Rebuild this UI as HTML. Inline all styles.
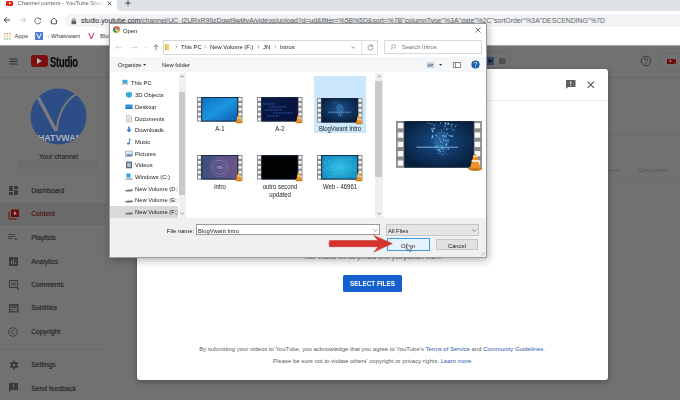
<!DOCTYPE html>
<html><head><meta charset="utf-8">
<style>
*{margin:0;padding:0;box-sizing:border-box}
html,body{width:680px;height:400px;overflow:hidden;background:#fff;font-family:"Liberation Sans",sans-serif}
.a{position:absolute}
.t{position:absolute;white-space:nowrap;line-height:1}
</style></head><body>
<!-- Chrome tab strip -->
<div class="a" style="left:0;top:0;width:680px;height:12px;background:#fff"></div>
<div class="a" style="left:116.5px;top:0;width:564px;height:11px;background:#dee1e6;border-radius:0 0 0 4px"></div>
<div class="a" style="left:6px;top:1px;width:7px;height:4.5px;background:#e62117;border-radius:1.2px"></div>
<svg class="a" style="left:8.6px;top:1.9px" width="3" height="3"><path d="M0 0L2.2 1.3L0 2.6Z" fill="#fff"/></svg>
<div class="t" style="left:17.5px;top:1.2px;font-size:5.9px;color:#606367;width:86px;overflow:hidden;-webkit-mask-image:linear-gradient(90deg,#000 85%,transparent)">Channel content - YouTube Studio</div>
<svg class="a" style="left:106.5px;top:1px" width="5" height="5"><path d="M0.7 0.7L4.3 4.3M4.3 0.7L0.7 4.3" stroke="#3c4043" stroke-width="0.8"/></svg>
<svg class="a" style="left:125px;top:0px" width="6" height="6"><path d="M3 0.3V5.7M0.3 3H5.7" stroke="#3c4043" stroke-width="0.9"/></svg>
<!-- toolbar -->
<div class="a" style="left:0;top:12px;width:680px;height:33px;background:#fff"></div>
<div class="a" style="left:65px;top:14px;width:640px;height:13px;background:#f1f3f4;border-radius:6.5px"></div>
<svg class="a" style="left:3px;top:16px" width="8" height="8"><path d="M7.2 4H1.2M4 1.2L1.2 4L4 6.8" stroke="#404346" stroke-width="1" fill="none"/></svg>
<svg class="a" style="left:18.5px;top:16px" width="8" height="8"><path d="M0.8 4H6.8M4 1.2L6.8 4L4 6.8" stroke="#bdc1c6" stroke-width="0.9" fill="none"/></svg>
<svg class="a" style="left:34px;top:16.5px" width="8" height="8"><path d="M6.3 2.2A3 3 0 1 0 6.8 4.6" stroke="#5f6368" stroke-width="0.9" fill="none"/><path d="M4.6 1.2H7V3.6Z" fill="#5f6368"/></svg>
<svg class="a" style="left:50px;top:16.5px" width="8" height="8"><path d="M1.4 3.6V6.8H6.4V3.6M0.6 4.2L3.9 1L7.2 4.2" stroke="#404346" stroke-width="0.9" fill="none"/></svg>
<svg class="a" style="left:70.5px;top:17.5px" width="6" height="7"><rect x="0.5" y="2.6" width="4.6" height="3.6" fill="#5f6368"/><path d="M1.5 2.8V1.9A1.3 1.3 0 0 1 4.1 1.9V2.8" stroke="#5f6368" stroke-width="0.8" fill="none"/></svg>
<div class="t" style="left:81px;top:18.2px;font-size:6.85px;color:#202124">studio.youtube.com<span style="color:#5f6368">/channel/UC_i2URxR99zDqwt9wiitvA/videos/upload?d=ud&amp;filter=%5B%5D&amp;sort=%7B"columnType"%3A"date"%2C"sortOrder"%3A"DESCENDING"%7D</span></div>
<!-- bookmarks -->
<svg class="a" style="left:3.5px;top:32.5px" width="7" height="7">
<g fill="#d99a92"><rect x="0" y="0" width="1.5" height="1.5"/><rect x="2.6" y="0" width="1.5" height="1.5"/><rect x="5.2" y="0" width="1.5" height="1.5"/></g>
<g fill="#e3cf8f"><rect x="0" y="2.6" width="1.5" height="1.5"/><rect x="2.6" y="2.6" width="1.5" height="1.5"/><rect x="5.2" y="2.6" width="1.5" height="1.5"/></g>
<g fill="#8fbf99"><rect x="0" y="5.2" width="1.5" height="1.5"/><rect x="2.6" y="5.2" width="1.5" height="1.5"/><rect x="5.2" y="5.2" width="1.5" height="1.5"/></g></svg>
<div class="t" style="left:14.5px;top:33.5px;font-size:5.9px;color:#3c4043">Apps</div>
<div class="a" style="left:35.3px;top:32.2px;width:7.8px;height:7.5px;background:#4a7dd0"></div>
<svg class="a" style="left:35.3px;top:32.2px" width="8" height="8"><path d="M1.6 1.5L3.9 6.3L6.2 1.5" stroke="#fff" stroke-width="1" fill="none"/></svg>
<div class="t" style="left:47.5px;top:33.5px;font-size:5.9px;color:#3c4043">- Whatvwant</div>
<svg class="a" style="left:88px;top:32px" width="7" height="8"><path d="M0.8 1.2L3.3 7L5.8 0.8" stroke="#c8102e" stroke-width="0.9" fill="none"/></svg>
<div class="t" style="left:100px;top:33.5px;font-size:5.9px;color:#3c4043">Blogs</div>

<!-- studio page (dimmed) -->
<div class="a" style="left:0;top:45px;width:680px;height:355px;background:#717171"></div>
<div class="a" style="left:0;top:45px;width:680px;height:1px;background:#a8a8a8"></div>
<div class="a" style="left:0;top:76.5px;width:680px;height:1px;background:#676767"></div>
<div class="a" style="left:121px;top:257px;width:1px;height:143px;background:#747474"></div>
<svg class="a" style="left:9px;top:57.5px" width="9" height="7"><path d="M0.5 1H8.5M0.5 3.5H8.5M0.5 6H8.5" stroke="#2a2a2a" stroke-width="1.05"/></svg>
<div class="a" style="left:31.3px;top:55.2px;width:16.5px;height:11.6px;background:#7a1010;border-radius:3px"></div>
<svg class="a" style="left:37.3px;top:58px" width="6" height="6"><path d="M0 0L4.8 3L0 6Z" fill="#b9b9b9"/></svg>
<div class="t" style="left:50.3px;top:54.5px;font-size:14px;font-weight:bold;color:#0a0a0a;-webkit-text-stroke:0.25px #0a0a0a;transform:scaleX(0.665);transform-origin:0 0;letter-spacing:-0.3px">Studio</div>
<!-- studio search / header right -->
<div class="a" style="left:470px;top:51.5px;width:39.5px;height:16.5px;border:1px solid #686868"></div>
<div class="a" style="left:486.5px;top:57px;width:7.2px;height:7.8px;background:#34476a"></div>
<svg class="a" style="left:486.5px;top:57px" width="8" height="8"><path d="M1.5 2L5.5 3.9L1.5 5.8Z" fill="#111"/></svg>
<svg class="a" style="left:498.5px;top:58.4px" width="7" height="6"><path d="M0 1H6.5M0 3H6.5M0 5H6.5" stroke="#2a2a2a" stroke-width="0.95"/></svg>
<svg class="a" style="left:640px;top:55px" width="12" height="12"><circle cx="6" cy="6" r="4.8" stroke="#363636" stroke-width="0.9" fill="none"/><path d="M4.4 4.8A1.6 1.6 0 1 1 6.6 6.2C6.1 6.5 6 6.8 6 7.4" stroke="#363636" stroke-width="0.9" fill="none"/><circle cx="6" cy="8.8" r="0.55" fill="#363636"/></svg>
<div class="a" style="left:660px;top:52.5px;width:30px;height:18px;border:1px solid #6b6b6b"></div>
<div class="a" style="left:667px;top:58.5px;width:6.5px;height:5px;background:#650909"></div>
<svg class="a" style="left:672.5px;top:58.5px" width="4" height="5"><path d="M0 1.5L3 0V5L0 3.5Z" fill="#650909"/></svg>
<svg class="a" style="left:668px;top:59px" width="5" height="5"><path d="M2.2 0.4V3.6M0.6 2H3.8" stroke="#b87a7a" stroke-width="0.8"/></svg>
<!-- avatar -->
<svg class="a" style="left:30px;top:88px" width="57" height="57">
<circle cx="28.5" cy="28.5" r="28" fill="#2c4d85"/>
<path d="M8.3 9.5L26 43" stroke="#7d7d7d" stroke-width="3.3"/>
<path d="M26.5 43.2C28.5 24 36 12 46.5 6" stroke="#7d7d7d" stroke-width="1.9" fill="none"/>
<clipPath id="avc"><circle cx="28.5" cy="28.5" r="28"/></clipPath><text clip-path="url(#avc)" x="28.5" y="53.2" font-family="Liberation Sans" font-weight="bold" font-size="8.6" fill="#aeb4be" text-anchor="middle" textLength="58" lengthAdjust="spacingAndGlyphs">WHATVWANT</text>
</svg>
<div class="t" style="left:39px;top:153.6px;font-size:6.72px;color:#111">Your channel</div>
<div class="a" style="left:18px;top:160px;width:81px;height:9px;background:#6c6c6c"></div>
<!-- nav -->
<div class="a" style="left:0;top:202.8px;width:106px;height:22px;background:#6a6a6a"></div>
<svg class="a" style="left:9px;top:186px" width="10" height="10"><g fill="#3b3b3b"><rect x="0" y="0" width="4" height="5"/><rect x="5" y="0" width="4" height="3"/><rect x="0" y="6" width="4" height="3"/><rect x="5" y="4" width="4" height="5"/></g></svg>
<div class="t" style="left:31.2px;top:188.0px;font-size:6.75px;color:#222;-webkit-text-stroke:0.12px #222">Dashboard</div>
<svg class="a" style="left:7.8px;top:208.8px" width="12" height="11"><path d="M1 2.5V10H8.5" stroke="#5a1010" stroke-width="1" fill="none"/><rect x="3" y="0.5" width="8" height="7.5" fill="#6b0e0e"/><path d="M6 2.3L8.6 4.25L6 6.2Z" fill="#a8a0a0"/></svg>
<div class="t" style="left:31.2px;top:211.3px;font-size:6.75px;color:#4e0d0d;-webkit-text-stroke:0.12px #4e0d0d">Content</div>
<svg class="a" style="left:8.4px;top:234px" width="10" height="7"><path d="M0 0.5H7.5M0 2.5H7.5M0 4.5H5" stroke="#3b3b3b" stroke-width="0.8"/><path d="M7 3.8L9.5 5.3L7 6.8Z" fill="#3b3b3b"/></svg>
<div class="t" style="left:31.2px;top:234.9px;font-size:6.75px;color:#222;-webkit-text-stroke:0.12px #222">Playlists</div>
<svg class="a" style="left:8.8px;top:256.7px" width="10" height="10"><rect x="0" y="0" width="9" height="9" fill="#3b3b3b"/><path d="M2.5 7V4M4.5 7V2.5M6.5 7V5.5" stroke="#7b7b7b" stroke-width="0.9"/></svg>
<div class="t" style="left:31.2px;top:258.9px;font-size:6.75px;color:#222;-webkit-text-stroke:0.12px #222">Analytics</div>
<svg class="a" style="left:8.8px;top:280px" width="10" height="10"><path d="M0.5 0.5H8.5V7.5H9L9.3 9.5L7.5 7.5H0.5Z" stroke="#3b3b3b" stroke-width="1" fill="none"/><rect x="2" y="2.2" width="5" height="3.5" fill="#555"/></svg>
<div class="t" style="left:31.2px;top:282.0px;font-size:6.75px;color:#222;-webkit-text-stroke:0.12px #222">Comments</div>
<svg class="a" style="left:8.8px;top:303.5px" width="10" height="9"><rect x="0.5" y="0.5" width="8.5" height="7.5" fill="#4a4a4a" stroke="#3b3b3b" stroke-width="1"/><path d="M1.5 4.6H4.5M5.5 4.6H8M1.5 6.3H3M4 6.3H8" stroke="#8a8a8a" stroke-width="0.8"/></svg>
<div class="t" style="left:31.2px;top:305.3px;font-size:6.75px;color:#222;-webkit-text-stroke:0.12px #222">Subtitles</div>
<svg class="a" style="left:8px;top:326.6px" width="10" height="10"><circle cx="5" cy="5" r="4.3" stroke="#3b3b3b" stroke-width="0.9" fill="none"/><path d="M6.3 3.8A1.7 1.7 0 1 0 6.3 6.2" stroke="#3b3b3b" stroke-width="0.8" fill="none"/></svg>
<div class="t" style="left:31.2px;top:329.1px;font-size:6.75px;color:#222;-webkit-text-stroke:0.12px #222">Copyright</div>
<div class="a" style="left:0;top:349px;width:106px;height:1px;background:#696969"></div>
<svg class="a" style="left:8.5px;top:359.5px" width="10" height="10"><g transform="translate(5 5)"><circle r="3.2" fill="#3b3b3b"/><g stroke="#3b3b3b" stroke-width="1.6"><path d="M0 -4.6V4.6"/><path d="M-4 -2.3L4 2.3"/><path d="M-4 2.3L4 -2.3"/></g><circle r="1.2" fill="#747474"/></g></svg>
<div class="t" style="left:31.2px;top:361.9px;font-size:6.75px;color:#222;-webkit-text-stroke:0.12px #222">Settings</div>
<svg class="a" style="left:8.5px;top:383px" width="10" height="10"><path d="M0 0H9V7H2L0 9Z" fill="#3b3b3b"/><path d="M4.5 1.5V4M4.5 5V5.8" stroke="#7b7b7b" stroke-width="0.9"/></svg>
<div class="t" style="left:31.2px;top:385.5px;font-size:6.75px;color:#222;-webkit-text-stroke:0.12px #222">Send feedback</div>
<!-- right side content behind modal -->
<div class="a" style="left:608px;top:134px;width:72px;height:1px;background:#696969"></div>
<div class="t" style="left:608px;top:167px;font-size:6.05px;color:#5a5a5a">ews</div>
<div class="t" style="left:638.4px;top:167px;font-size:6.05px;color:#5a5a5a">Comments</div>
<div class="a" style="left:608px;top:176px;width:72px;height:1px;background:#6d6d6d"></div>

<!-- upload modal -->
<div class="a" style="left:137px;top:68.8px;width:471px;height:311.4px;background:#fff;border-radius:3px;box-shadow:0 2px 6px rgba(0,0,0,.3)"></div>
<div class="a" style="left:137px;top:100px;width:471px;height:1px;background:#ececec"></div>
<svg class="a" style="left:565.5px;top:80px" width="10" height="9"><path d="M0 0H9.5V7H2L0 9Z" fill="#606060"/><path d="M4.75 1.4V4.2M4.75 5.1V5.9" stroke="#fff" stroke-width="1"/></svg>
<svg class="a" style="left:586.5px;top:80.5px" width="8" height="8"><path d="M0.6 0.6L6.9 6.9M6.9 0.6L0.6 6.9" stroke="#555" stroke-width="1.1"/></svg>
<div class="t" style="left:303px;top:253.5px;font-size:6.38px;color:#606060">Your videos will be private until you publish them.</div>
<div class="a" style="left:342.6px;top:274.5px;width:59.3px;height:17.2px;background:#1560cf;border-radius:1.5px"></div>
<div class="t" style="left:350px;top:280.4px;font-size:7px;font-weight:bold;color:#fff;transform:scaleX(0.91);transform-origin:0 0">SELECT FILES</div>
<div class="t" style="left:199.2px;top:346.8px;font-size:5.97px;color:#606060">By submitting your videos to YouTube, you acknowledge that you agree to YouTube's <span style="color:#2c5aa8">Terms of Service</span> and <span style="color:#2c5aa8">Community Guidelines</span>.</div>
<div class="t" style="left:273px;top:358.5px;font-size:5.97px;color:#606060">Please be sure not to violate others' copyright or privacy rights. <span style="color:#2c5aa8">Learn more</span></div>

<!-- open dialog -->
<div class="a" style="left:108.5px;top:22.5px;width:378px;height:235px;background:#fff;border:1px solid #9a9a9a;box-shadow:1px 2px 8px rgba(0,0,0,.32)"></div>
<svg class="a" style="left:112.8px;top:26px" width="7" height="7"><circle cx="3.5" cy="3.5" r="3.3" fill="#db4437"/><path d="M3.5 3.5L0.3 2.6A3.3 3.3 0 0 0 3 6.8Z" fill="#0f9d58"/><path d="M3.5 3.5L3 6.8A3.3 3.3 0 0 0 6.8 3.2Z" fill="#f4b400"/><circle cx="3.5" cy="3.5" r="1.5" fill="#fff"/><circle cx="3.5" cy="3.5" r="1.1" fill="#4285f4"/></svg>
<div class="t" style="left:122.8px;top:27.7px;font-size:6.2px;transform:scaleX(0.94);transform-origin:0 0;color:#1a1a1a">Open</div>
<svg class="a" style="left:475px;top:27px" width="6" height="6"><path d="M0.5 0.5L5.5 5.5M5.5 0.5L0.5 5.5" stroke="#333" stroke-width="0.7"/></svg>
<svg class="a" style="left:115px;top:44.5px" width="7" height="5"><path d="M6.5 2.5H0.8M2.8 0.5L0.8 2.5L2.8 4.5" stroke="#c4c4c4" stroke-width="0.6" fill="none"/></svg>
<svg class="a" style="left:131px;top:44.5px" width="7" height="5"><path d="M0.5 2.5H6.2M4.2 0.5L6.2 2.5L4.2 4.5" stroke="#c4c4c4" stroke-width="0.6" fill="none"/></svg>
<svg class="a" style="left:143.5px;top:46px" width="4" height="3"><path d="M0.3 0.5L1.8 2L3.3 0.5" stroke="#c4c4c4" stroke-width="0.6" fill="none"/></svg>
<svg class="a" style="left:153px;top:43.5px" width="6" height="7"><path d="M3 6.5V0.8M0.8 3L3 0.8L5.2 3" stroke="#555" stroke-width="0.7" fill="none"/></svg>
<div class="a" style="left:162.5px;top:39.5px;width:215.5px;height:15px;border:1px solid #d9d9d9;background:#fff"></div>
<div class="a" style="left:361px;top:40.5px;width:1px;height:13px;background:#e3e3e3"></div>
<div class="a" style="left:164.5px;top:43.5px;width:4.5px;height:6.5px;background:#f2cf63"></div>
<div class="a" style="left:164.5px;top:43.5px;width:1.5px;height:6.5px;background:#dcae3c"></div>
<svg class="a" style="left:175.3px;top:45.3px" width="3" height="4"><path d="M0.5 0.4L2 1.8L0.5 3.2" stroke="#666" stroke-width="0.55" fill="none"/></svg>
<svg class="a" style="left:204.3px;top:45.3px" width="3" height="4"><path d="M0.5 0.4L2 1.8L0.5 3.2" stroke="#666" stroke-width="0.55" fill="none"/></svg>
<svg class="a" style="left:256.9px;top:45.3px" width="3" height="4"><path d="M0.5 0.4L2 1.8L0.5 3.2" stroke="#666" stroke-width="0.55" fill="none"/></svg>
<svg class="a" style="left:273.9px;top:45.3px" width="3" height="4"><path d="M0.5 0.4L2 1.8L0.5 3.2" stroke="#666" stroke-width="0.55" fill="none"/></svg>
<div class="t" style="left:181px;top:44.4px;font-size:6.2px;transform:scaleX(0.94);transform-origin:0 0;color:#1a1a1a">This PC</div>
<div class="t" style="left:210px;top:44.4px;font-size:6.2px;transform:scaleX(0.94);transform-origin:0 0;color:#1a1a1a">New Volume (F:)</div>
<div class="t" style="left:263px;top:44.4px;font-size:6.2px;transform:scaleX(0.94);transform-origin:0 0;color:#1a1a1a">JN</div>
<div class="t" style="left:279.7px;top:44.4px;font-size:6.2px;transform:scaleX(0.94);transform-origin:0 0;color:#1a1a1a">Intros</div>
<svg class="a" style="left:351px;top:46px" width="5" height="3"><path d="M0.4 0.4L2.4 2.3L4.4 0.4" stroke="#555" stroke-width="0.6" fill="none"/></svg>
<svg class="a" style="left:366.5px;top:43.8px" width="7" height="7"><path d="M5.4 2A2.5 2.5 0 1 0 6 3.8" stroke="#555" stroke-width="0.6" fill="none"/><path d="M4.3 0.5V2.3H6.1" stroke="#555" stroke-width="0.6" fill="none"/></svg>
<div class="a" style="left:383.8px;top:39.7px;width:98px;height:14.6px;border:1px solid #d9d9d9;background:#fff"></div>
<svg class="a" style="left:389.5px;top:44px" width="6" height="6"><circle cx="3.6" cy="2.4" r="1.8" stroke="#777" stroke-width="0.55" fill="none"/><path d="M2.3 3.7L0.5 5.5" stroke="#777" stroke-width="0.6"/></svg>
<div class="t" style="left:402px;top:44.4px;font-size:6.2px;transform:scaleX(0.94);transform-origin:0 0;color:#6d6d6d">Search Intros</div>
<div class="a" style="left:109.5px;top:57.2px;width:376px;height:15.2px;background:#f5f6f7"></div>
<div class="t" style="left:118px;top:62.4px;font-size:6.2px;transform:scaleX(0.94);transform-origin:0 0;color:#1a1a1a">Organize</div>
<svg class="a" style="left:143px;top:64.2px" width="4" height="3"><path d="M0 0H3.2L1.6 1.8Z" fill="#333"/></svg>
<div class="t" style="left:161.5px;top:62.4px;font-size:6.2px;transform:scaleX(0.94);transform-origin:0 0;color:#1a1a1a">New folder</div>
<svg class="a" style="left:426.8px;top:62.2px" width="7" height="6"><rect x="0" y="0" width="6.8" height="5.4" fill="#c9d6e2"/><path d="M0.5 3.2H3.5L6.3 2.5" stroke="#3a4a5a" stroke-width="0.9" fill="none"/><rect x="0" y="4.4" width="6.8" height="1" fill="#9fb3c6"/></svg>
<svg class="a" style="left:438.8px;top:63.8px" width="4" height="3"><path d="M0 0H3.2L1.6 1.8Z" fill="#333"/></svg>
<div class="a" style="left:453px;top:62.3px;width:7.8px;height:5.4px;border:0.7px solid #8a8a8a;background:#fff"></div>
<div class="a" style="left:455.3px;top:62.5px;width:0.7px;height:5px;background:#8a8a8a"></div>
<svg class="a" style="left:470.5px;top:60.2px" width="9" height="9"><circle cx="4.5" cy="4.5" r="4.1" fill="#1a5ea8"/><path d="M3.3 3.4A1.25 1.25 0 1 1 5 4.6C4.6 4.8 4.5 5 4.5 5.5" stroke="#fff" stroke-width="0.8" fill="none"/><circle cx="4.5" cy="6.7" r="0.5" fill="#fff"/></svg>
<div class="a" style="left:178.5px;top:72.5px;width:7px;height:145.5px;background:#f0f0f0"></div>
<div class="a" style="left:178.8px;top:92px;width:6.5px;height:103px;background:#c9c9c9"></div>
<svg class="a" style="left:180px;top:75px" width="5" height="3"><path d="M0.4 2.4L2.2 0.6L4 2.4" stroke="#555" stroke-width="0.6" fill="none"/></svg>
<svg class="a" style="left:180px;top:212px" width="5" height="3"><path d="M0.4 0.6L2.2 2.4L4 0.6" stroke="#555" stroke-width="0.6" fill="none"/></svg>
<div class="a" style="left:110px;top:206px;width:68px;height:11.5px;background:#d9d9d9"></div>
<svg class="a" style="left:121px;top:79.3px" width="8" height="8"><rect x="1.5" y="0.8" width="5" height="3.5" fill="#3fa9e6"/><path d="M0.5 5.5L3.5 4.5L7 5.2" stroke="#555" stroke-width="0.6" fill="none"/></svg>
<div class="t" style="left:131px;top:80.3px;font-size:6.2px;color:#1a1a1a;width:48.9px;overflow:hidden;transform:scaleX(0.94);transform-origin:0 0">This PC</div>
<svg class="a" style="left:125px;top:91.10000000000001px" width="8" height="8"><path d="M1 2L4 0.8L7 2V5.5L4 6.8L1 5.5Z" fill="#39b6e8"/><path d="M1 2L4 3.2L7 2M4 3.2V6.8" stroke="#1a7fb5" stroke-width="0.5" fill="none"/></svg>
<div class="t" style="left:135px;top:92.10000000000001px;font-size:6.2px;color:#1a1a1a;width:44.7px;overflow:hidden;transform:scaleX(0.94);transform-origin:0 0">3D Objects</div>
<svg class="a" style="left:125px;top:102.8px" width="8" height="8"><rect x="0.5" y="1.5" width="7" height="4.5" fill="#2e8fdc"/><rect x="0.5" y="5" width="7" height="1" fill="#1a6fb8"/></svg>
<div class="t" style="left:135px;top:103.8px;font-size:6.2px;color:#1a1a1a;width:44.7px;overflow:hidden;transform:scaleX(0.94);transform-origin:0 0">Desktop</div>
<svg class="a" style="left:125px;top:114.5px" width="8" height="8"><path d="M1.5 0.5H5L6.5 2V7H1.5Z" fill="#f2f2f2" stroke="#999" stroke-width="0.5"/><path d="M2.5 3H5.5M2.5 4.2H5.5M2.5 5.4H5.5" stroke="#aaa" stroke-width="0.4"/></svg>
<div class="t" style="left:135px;top:115.5px;font-size:6.2px;color:#1a1a1a;width:44.7px;overflow:hidden;transform:scaleX(0.94);transform-origin:0 0">Documents</div>
<svg class="a" style="left:125px;top:126.2px" width="8" height="8"><path d="M4 0.5V5" stroke="#2f7fd4" stroke-width="1.6"/><path d="M1.3 3.5L4 6.5L6.7 3.5Z" fill="#2f7fd4"/></svg>
<div class="t" style="left:135px;top:127.2px;font-size:6.2px;color:#1a1a1a;width:44.7px;overflow:hidden;transform:scaleX(0.94);transform-origin:0 0">Downloads</div>
<svg class="a" style="left:125px;top:137.89999999999998px" width="8" height="8"><path d="M4.5 0.8V5.5" stroke="#3d7fd0" stroke-width="0.8"/><ellipse cx="3.3" cy="5.6" rx="1.5" ry="1.1" fill="#3d7fd0"/><path d="M4.5 0.8L6.3 2.2" stroke="#3d7fd0" stroke-width="0.8"/></svg>
<div class="t" style="left:135px;top:138.89999999999998px;font-size:6.2px;color:#1a1a1a;width:44.7px;overflow:hidden;transform:scaleX(0.94);transform-origin:0 0">Music</div>
<svg class="a" style="left:125px;top:149.6px" width="8" height="8"><rect x="0.5" y="1" width="7" height="5.5" fill="#dfe9f3" stroke="#7a8fa3" stroke-width="0.5"/><path d="M1 6L3 3.5L5 5L7 3.5V6Z" fill="#5b86b3"/></svg>
<div class="t" style="left:135px;top:150.6px;font-size:6.2px;color:#1a1a1a;width:44.7px;overflow:hidden;transform:scaleX(0.94);transform-origin:0 0">Pictures</div>
<svg class="a" style="left:125px;top:161.29999999999998px" width="8" height="8"><rect x="1" y="0.5" width="6" height="6.8" fill="#5f6b78"/><rect x="2.2" y="1.8" width="3.6" height="4.2" fill="#a9c3de"/></svg>
<div class="t" style="left:135px;top:162.29999999999998px;font-size:6.2px;color:#1a1a1a;width:44.7px;overflow:hidden;transform:scaleX(0.94);transform-origin:0 0">Videos</div>
<svg class="a" style="left:125px;top:173.0px" width="8" height="8"><rect x="1.5" y="0.5" width="4" height="4" fill="#2f9fe0"/><path d="M0.5 6H7.5" stroke="#777" stroke-width="1"/></svg>
<div class="t" style="left:135px;top:174.0px;font-size:6.2px;color:#1a1a1a;width:44.7px;overflow:hidden;transform:scaleX(0.94);transform-origin:0 0">Windows (C:)</div>
<svg class="a" style="left:125px;top:184.7px" width="8" height="8"><path d="M0.5 5.2L7.5 4.5V6.2L0.5 6.5Z" fill="#666"/><path d="M0.5 5.2L2.5 4.2H7.5" stroke="#aaa" stroke-width="0.5" fill="none"/></svg>
<div class="t" style="left:135px;top:185.7px;font-size:6.2px;color:#1a1a1a;width:44.7px;overflow:hidden;transform:scaleX(0.94);transform-origin:0 0">New Volume (D:)</div>
<svg class="a" style="left:125px;top:196.39999999999998px" width="8" height="8"><path d="M0.5 5.2L7.5 4.5V6.2L0.5 6.5Z" fill="#666"/><path d="M0.5 5.2L2.5 4.2H7.5" stroke="#aaa" stroke-width="0.5" fill="none"/></svg>
<div class="t" style="left:135px;top:197.39999999999998px;font-size:6.2px;color:#1a1a1a;width:44.7px;overflow:hidden;transform:scaleX(0.94);transform-origin:0 0">New Volume (E:)</div>
<svg class="a" style="left:125px;top:208.1px" width="8" height="8"><path d="M0.5 5.2L7.5 4.5V6.2L0.5 6.5Z" fill="#666"/><path d="M0.5 5.2L2.5 4.2H7.5" stroke="#aaa" stroke-width="0.5" fill="none"/></svg>
<div class="t" style="left:135px;top:209.1px;font-size:6.2px;color:#1a1a1a;width:44.7px;overflow:hidden;transform:scaleX(0.94);transform-origin:0 0">New Volume (F:)</div>
<div class="a" style="left:375px;top:72.5px;width:7.5px;height:145.5px;background:#f0f0f0"></div>
<div class="a" style="left:375.3px;top:81px;width:7px;height:96px;background:#c9c9c9"></div>
<svg class="a" style="left:376.5px;top:75px" width="5" height="3"><path d="M0.4 2.4L2.2 0.6L4 2.4" stroke="#555" stroke-width="0.6" fill="none"/></svg>
<svg class="a" style="left:376.5px;top:212px" width="5" height="3"><path d="M0.4 0.6L2.2 2.4L4 0.6" stroke="#555" stroke-width="0.6" fill="none"/></svg>
<div class="a" style="left:314.4px;top:75.9px;width:51.3px;height:57.4px;background:#cce8ff"></div>
<svg class="a" style="left:197.4px;top:97.4px;overflow:visible" width="45.5" height="24.6" viewBox="0 0 45.5 24.6"><defs><linearGradient id="g1" x1="0" y1="0" x2="1" y2="1"><stop offset="0" stop-color="#0f6fc0"/><stop offset=".5" stop-color="#1b95e0"/><stop offset="1" stop-color="#0a5aa8"/></linearGradient></defs><rect x="0" y="0" width="45.5" height="24.6" fill="#8d8d8d"/><rect x="4.78" y="0.49" width="35.95" height="23.62" fill="url(#g1)" stroke="#0b1f3a" stroke-width="0.86"/><circle cx="13.3" cy="13.0" r="0.29" fill="#9fe0ff" opacity="0.46"/><circle cx="26.9" cy="2.4" r="0.20" fill="#9fe0ff" opacity="0.54"/><circle cx="14.1" cy="6.2" r="0.45" fill="#9fe0ff" opacity="0.41"/><circle cx="34.3" cy="11.5" r="0.36" fill="#9fe0ff" opacity="0.29"/><circle cx="27.2" cy="20.1" r="0.33" fill="#9fe0ff" opacity="0.51"/><circle cx="28.5" cy="2.4" r="0.39" fill="#9fe0ff" opacity="0.45"/><circle cx="15.5" cy="1.7" r="0.42" fill="#9fe0ff" opacity="0.41"/><circle cx="30.2" cy="20.3" r="0.38" fill="#9fe0ff" opacity="0.57"/><circle cx="18.8" cy="18.6" r="0.31" fill="#9fe0ff" opacity="0.58"/><circle cx="35.8" cy="3.1" r="0.23" fill="#9fe0ff" opacity="0.32"/><circle cx="38.8" cy="10.6" r="0.36" fill="#9fe0ff" opacity="0.35"/><circle cx="22.8" cy="9.5" r="0.29" fill="#9fe0ff" opacity="0.45"/><circle cx="25.4" cy="20.9" r="0.37" fill="#9fe0ff" opacity="0.57"/><circle cx="35.0" cy="22.8" r="0.37" fill="#9fe0ff" opacity="0.30"/><circle cx="35.1" cy="22.2" r="0.43" fill="#9fe0ff" opacity="0.44"/><circle cx="30.0" cy="5.6" r="0.41" fill="#9fe0ff" opacity="0.45"/><circle cx="15.0" cy="2.4" r="0.41" fill="#9fe0ff" opacity="0.60"/><circle cx="8.1" cy="18.6" r="0.30" fill="#9fe0ff" opacity="0.29"/><circle cx="15.3" cy="17.9" r="0.42" fill="#9fe0ff" opacity="0.26"/><circle cx="26.5" cy="2.0" r="0.38" fill="#9fe0ff" opacity="0.36"/><circle cx="35.8" cy="22.6" r="0.33" fill="#9fe0ff" opacity="0.60"/><circle cx="15.8" cy="2.7" r="0.35" fill="#9fe0ff" opacity="0.25"/><circle cx="11.9" cy="10.0" r="0.35" fill="#9fe0ff" opacity="0.30"/><circle cx="6.5" cy="20.1" r="0.28" fill="#9fe0ff" opacity="0.59"/><circle cx="36.4" cy="9.3" r="0.32" fill="#9fe0ff" opacity="0.43"/><circle cx="27.5" cy="14.1" r="0.34" fill="#9fe0ff" opacity="0.46"/><circle cx="37.9" cy="12.2" r="0.31" fill="#9fe0ff" opacity="0.50"/><circle cx="13.3" cy="7.6" r="0.44" fill="#9fe0ff" opacity="0.43"/><circle cx="24.2" cy="1.3" r="0.30" fill="#9fe0ff" opacity="0.45"/><circle cx="5.7" cy="14.5" r="0.36" fill="#9fe0ff" opacity="0.26"/><circle cx="27.0" cy="11.3" r="0.37" fill="#9fe0ff" opacity="0.37"/><circle cx="29.7" cy="17.2" r="0.21" fill="#9fe0ff" opacity="0.26"/><circle cx="28.7" cy="22.2" r="0.26" fill="#9fe0ff" opacity="0.40"/><circle cx="25.7" cy="8.0" r="0.29" fill="#9fe0ff" opacity="0.35"/><circle cx="17.9" cy="14.1" r="0.28" fill="#9fe0ff" opacity="0.38"/><circle cx="32.0" cy="1.6" r="0.34" fill="#9fe0ff" opacity="0.50"/><circle cx="15.9" cy="5.9" r="0.40" fill="#9fe0ff" opacity="0.33"/><circle cx="11.6" cy="10.6" r="0.37" fill="#9fe0ff" opacity="0.28"/><circle cx="16.3" cy="8.3" r="0.41" fill="#9fe0ff" opacity="0.40"/><circle cx="34.9" cy="4.7" r="0.28" fill="#9fe0ff" opacity="0.47"/><rect x="0.96" y="1.08" width="2.87" height="2.76" fill="#fbfbfb"/><rect x="41.68" y="1.08" width="2.87" height="2.76" fill="#fbfbfb"/><rect x="0.96" y="6.00" width="2.87" height="2.76" fill="#fbfbfb"/><rect x="41.68" y="6.00" width="2.87" height="2.76" fill="#fbfbfb"/><rect x="0.96" y="10.92" width="2.87" height="2.76" fill="#fbfbfb"/><rect x="41.68" y="10.92" width="2.87" height="2.76" fill="#fbfbfb"/><rect x="0.96" y="15.84" width="2.87" height="2.76" fill="#fbfbfb"/><rect x="41.68" y="15.84" width="2.87" height="2.76" fill="#fbfbfb"/><rect x="0.96" y="20.76" width="2.87" height="2.76" fill="#fbfbfb"/><rect x="41.68" y="20.76" width="2.87" height="2.76" fill="#fbfbfb"/><ellipse cx="41.92" cy="25.00" rx="3.70" ry="1.30" fill="#c8791c"/><path d="M41.12 17.60H42.72L44.72 24.90H39.12Z" fill="#ec9526"/><path d="M40.02 21.00H43.82" stroke="#f7e6cc" stroke-width="1.00"/><path d="M40.72 18.60H43.12" stroke="#f7e6cc" stroke-width="0.60"/></svg>
<svg class="a" style="left:257.4px;top:97.4px;overflow:visible" width="45.5" height="24.6" viewBox="0 0 45.5 24.6"><defs><linearGradient id="g2" x1="0" y1="0" x2="1" y2="1"><stop offset="0" stop-color="#0b1a4a"/><stop offset="1" stop-color="#06113a"/></linearGradient></defs><rect x="0" y="0" width="45.5" height="24.6" fill="#8d8d8d"/><rect x="4.78" y="0.49" width="35.95" height="23.62" fill="url(#g2)" stroke="#0b1f3a" stroke-width="0.86"/><path d="M6 7H18M12 10H30M8 13H26M16 16H36M10 19H22" stroke="#4a9bff" stroke-width="0.6" stroke-dasharray="1 0.5" opacity="1"/><rect x="0.96" y="1.08" width="2.87" height="2.76" fill="#fbfbfb"/><rect x="41.68" y="1.08" width="2.87" height="2.76" fill="#fbfbfb"/><rect x="0.96" y="6.00" width="2.87" height="2.76" fill="#fbfbfb"/><rect x="41.68" y="6.00" width="2.87" height="2.76" fill="#fbfbfb"/><rect x="0.96" y="10.92" width="2.87" height="2.76" fill="#fbfbfb"/><rect x="41.68" y="10.92" width="2.87" height="2.76" fill="#fbfbfb"/><rect x="0.96" y="15.84" width="2.87" height="2.76" fill="#fbfbfb"/><rect x="41.68" y="15.84" width="2.87" height="2.76" fill="#fbfbfb"/><rect x="0.96" y="20.76" width="2.87" height="2.76" fill="#fbfbfb"/><rect x="41.68" y="20.76" width="2.87" height="2.76" fill="#fbfbfb"/><ellipse cx="41.92" cy="25.00" rx="3.70" ry="1.30" fill="#c8791c"/><path d="M41.12 17.60H42.72L44.72 24.90H39.12Z" fill="#ec9526"/><path d="M40.02 21.00H43.82" stroke="#f7e6cc" stroke-width="1.00"/><path d="M40.72 18.60H43.12" stroke="#f7e6cc" stroke-width="0.60"/></svg>
<svg class="a" style="left:317.2px;top:97.7px;overflow:visible" width="45.5" height="24.6" viewBox="0 0 45.5 24.6"><defs><radialGradient id="g3" cx=".5" cy=".45" r=".6"><stop offset="0" stop-color="#1a4f8a"/><stop offset="1" stop-color="#07203f"/></radialGradient></defs><rect x="0" y="0" width="45.5" height="24.6" fill="#8d8d8d"/><rect x="4.78" y="0.49" width="35.95" height="23.62" fill="url(#g3)" stroke="#0b1f3a" stroke-width="0.86"/><path d="M11 14.2H34" stroke="#a9dcff" stroke-width="0.45"/><ellipse cx="23" cy="11.5" rx="3.5" ry="6" fill="#3f8fd0" opacity=".35"/><circle cx="20.2" cy="4.6" r="0.40" fill="#8fd0ff" opacity="0.40"/><circle cx="23.6" cy="8.2" r="0.22" fill="#8fd0ff" opacity="0.63"/><circle cx="21.8" cy="16.1" r="0.24" fill="#8fd0ff" opacity="0.48"/><circle cx="24.2" cy="8.7" r="0.49" fill="#8fd0ff" opacity="0.39"/><circle cx="17.3" cy="4.0" r="0.29" fill="#8fd0ff" opacity="0.80"/><circle cx="25.2" cy="8.3" r="0.36" fill="#8fd0ff" opacity="0.39"/><circle cx="25.9" cy="9.3" r="0.29" fill="#8fd0ff" opacity="0.68"/><circle cx="22.3" cy="7.1" r="0.44" fill="#8fd0ff" opacity="0.74"/><circle cx="23.4" cy="16.9" r="0.42" fill="#8fd0ff" opacity="0.52"/><circle cx="21.7" cy="14.9" r="0.25" fill="#8fd0ff" opacity="0.62"/><circle cx="26.1" cy="12.1" r="0.37" fill="#8fd0ff" opacity="0.61"/><circle cx="22.6" cy="13.3" r="0.22" fill="#8fd0ff" opacity="0.74"/><circle cx="28.2" cy="6.8" r="0.32" fill="#8fd0ff" opacity="0.72"/><circle cx="17.7" cy="4.0" r="0.22" fill="#8fd0ff" opacity="0.77"/><circle cx="21.3" cy="16.8" r="0.22" fill="#8fd0ff" opacity="0.60"/><circle cx="23.8" cy="17.0" r="0.45" fill="#8fd0ff" opacity="0.83"/><circle cx="19.5" cy="9.1" r="0.31" fill="#8fd0ff" opacity="0.84"/><circle cx="17.8" cy="5.9" r="0.27" fill="#8fd0ff" opacity="0.62"/><circle cx="24.4" cy="6.5" r="0.20" fill="#8fd0ff" opacity="0.59"/><circle cx="20.9" cy="11.6" r="0.49" fill="#8fd0ff" opacity="0.73"/><circle cx="23.2" cy="12.5" r="0.40" fill="#8fd0ff" opacity="0.39"/><circle cx="21.3" cy="8.8" r="0.23" fill="#8fd0ff" opacity="0.70"/><circle cx="18.3" cy="4.8" r="0.30" fill="#8fd0ff" opacity="0.39"/><circle cx="24.8" cy="4.5" r="0.28" fill="#8fd0ff" opacity="0.55"/><circle cx="20.8" cy="4.1" r="0.45" fill="#8fd0ff" opacity="0.90"/><circle cx="22.5" cy="10.2" r="0.23" fill="#8fd0ff" opacity="0.42"/><circle cx="20.5" cy="6.5" r="0.45" fill="#8fd0ff" opacity="0.45"/><circle cx="23.5" cy="4.5" r="0.36" fill="#8fd0ff" opacity="0.37"/><circle cx="23.4" cy="18.6" r="0.46" fill="#8fd0ff" opacity="0.74"/><circle cx="19.2" cy="8.2" r="0.25" fill="#8fd0ff" opacity="0.78"/><circle cx="23.5" cy="15.2" r="0.30" fill="#8fd0ff" opacity="0.48"/><circle cx="20.7" cy="2.5" r="0.21" fill="#8fd0ff" opacity="0.51"/><circle cx="18.5" cy="5.9" r="0.26" fill="#8fd0ff" opacity="0.47"/><circle cx="25.0" cy="17.3" r="0.45" fill="#8fd0ff" opacity="0.62"/><circle cx="25.4" cy="15.6" r="0.23" fill="#8fd0ff" opacity="0.72"/><circle cx="27.0" cy="10.1" r="0.25" fill="#8fd0ff" opacity="0.79"/><circle cx="20.3" cy="15.6" r="0.49" fill="#8fd0ff" opacity="0.57"/><circle cx="21.4" cy="18.1" r="0.42" fill="#8fd0ff" opacity="0.45"/><circle cx="17.0" cy="4.6" r="0.47" fill="#8fd0ff" opacity="0.80"/><circle cx="20.6" cy="11.3" r="0.24" fill="#8fd0ff" opacity="0.37"/><circle cx="23.4" cy="17.9" r="0.33" fill="#8fd0ff" opacity="0.83"/><circle cx="28.2" cy="5.6" r="0.28" fill="#8fd0ff" opacity="0.52"/><circle cx="19.1" cy="9.1" r="0.24" fill="#8fd0ff" opacity="0.85"/><circle cx="20.7" cy="9.8" r="0.38" fill="#8fd0ff" opacity="0.85"/><circle cx="21.7" cy="17.6" r="0.35" fill="#8fd0ff" opacity="0.65"/><rect x="0.96" y="1.08" width="2.87" height="2.76" fill="#fbfbfb"/><rect x="41.68" y="1.08" width="2.87" height="2.76" fill="#fbfbfb"/><rect x="0.96" y="6.00" width="2.87" height="2.76" fill="#fbfbfb"/><rect x="41.68" y="6.00" width="2.87" height="2.76" fill="#fbfbfb"/><rect x="0.96" y="10.92" width="2.87" height="2.76" fill="#fbfbfb"/><rect x="41.68" y="10.92" width="2.87" height="2.76" fill="#fbfbfb"/><rect x="0.96" y="15.84" width="2.87" height="2.76" fill="#fbfbfb"/><rect x="41.68" y="15.84" width="2.87" height="2.76" fill="#fbfbfb"/><rect x="0.96" y="20.76" width="2.87" height="2.76" fill="#fbfbfb"/><rect x="41.68" y="20.76" width="2.87" height="2.76" fill="#fbfbfb"/><ellipse cx="41.92" cy="25.00" rx="3.70" ry="1.30" fill="#c8791c"/><path d="M41.12 17.60H42.72L44.72 24.90H39.12Z" fill="#ec9526"/><path d="M40.02 21.00H43.82" stroke="#f7e6cc" stroke-width="1.00"/><path d="M40.72 18.60H43.12" stroke="#f7e6cc" stroke-width="0.60"/></svg>
<svg class="a" style="left:197.4px;top:155.4px;overflow:visible" width="45.5" height="24.6" viewBox="0 0 45.5 24.6"><defs><linearGradient id="g4" x1="0" y1="0" x2="1" y2="0"><stop offset="0" stop-color="#3a4f7e"/><stop offset="1" stop-color="#6e5488"/></linearGradient></defs><rect x="0" y="0" width="45.5" height="24.6" fill="#8d8d8d"/><rect x="4.78" y="0.49" width="35.95" height="23.62" fill="url(#g4)" stroke="#0b1f3a" stroke-width="0.86"/><circle cx="22.5" cy="12.25" r="9.5" stroke="#b58fd8" stroke-width="0.5" fill="none" opacity=".6"/><circle cx="22.5" cy="12.25" r="7" stroke="#d0b0ee" stroke-width="0.6" fill="none" opacity=".7"/><circle cx="22.5" cy="12.25" r="4.5" stroke="#c9a0e0" stroke-width="0.4" fill="none" opacity=".6"/><text x="22.5" y="13.6" font-family="Liberation Sans" font-size="3" fill="#e8d8f4" text-anchor="middle">75%</text><rect x="0.96" y="1.08" width="2.87" height="2.76" fill="#fbfbfb"/><rect x="41.68" y="1.08" width="2.87" height="2.76" fill="#fbfbfb"/><rect x="0.96" y="6.00" width="2.87" height="2.76" fill="#fbfbfb"/><rect x="41.68" y="6.00" width="2.87" height="2.76" fill="#fbfbfb"/><rect x="0.96" y="10.92" width="2.87" height="2.76" fill="#fbfbfb"/><rect x="41.68" y="10.92" width="2.87" height="2.76" fill="#fbfbfb"/><rect x="0.96" y="15.84" width="2.87" height="2.76" fill="#fbfbfb"/><rect x="41.68" y="15.84" width="2.87" height="2.76" fill="#fbfbfb"/><rect x="0.96" y="20.76" width="2.87" height="2.76" fill="#fbfbfb"/><rect x="41.68" y="20.76" width="2.87" height="2.76" fill="#fbfbfb"/><ellipse cx="41.92" cy="25.00" rx="3.70" ry="1.30" fill="#c8791c"/><path d="M41.12 17.60H42.72L44.72 24.90H39.12Z" fill="#ec9526"/><path d="M40.02 21.00H43.82" stroke="#f7e6cc" stroke-width="1.00"/><path d="M40.72 18.60H43.12" stroke="#f7e6cc" stroke-width="0.60"/></svg>
<svg class="a" style="left:257.4px;top:155.4px;overflow:visible" width="45.5" height="24.6" viewBox="0 0 45.5 24.6"><defs></defs><rect x="0" y="0" width="45.5" height="24.6" fill="#8d8d8d"/><rect x="4.78" y="0.49" width="35.95" height="23.62" fill="#020202" stroke="#0b1f3a" stroke-width="0.86"/><rect x="0.96" y="1.08" width="2.87" height="2.76" fill="#fbfbfb"/><rect x="41.68" y="1.08" width="2.87" height="2.76" fill="#fbfbfb"/><rect x="0.96" y="6.00" width="2.87" height="2.76" fill="#fbfbfb"/><rect x="41.68" y="6.00" width="2.87" height="2.76" fill="#fbfbfb"/><rect x="0.96" y="10.92" width="2.87" height="2.76" fill="#fbfbfb"/><rect x="41.68" y="10.92" width="2.87" height="2.76" fill="#fbfbfb"/><rect x="0.96" y="15.84" width="2.87" height="2.76" fill="#fbfbfb"/><rect x="41.68" y="15.84" width="2.87" height="2.76" fill="#fbfbfb"/><rect x="0.96" y="20.76" width="2.87" height="2.76" fill="#fbfbfb"/><rect x="41.68" y="20.76" width="2.87" height="2.76" fill="#fbfbfb"/><ellipse cx="41.92" cy="25.00" rx="3.70" ry="1.30" fill="#c8791c"/><path d="M41.12 17.60H42.72L44.72 24.90H39.12Z" fill="#ec9526"/><path d="M40.02 21.00H43.82" stroke="#f7e6cc" stroke-width="1.00"/><path d="M40.72 18.60H43.12" stroke="#f7e6cc" stroke-width="0.60"/></svg>
<svg class="a" style="left:317.2px;top:155.4px;overflow:visible" width="45.5" height="24.6" viewBox="0 0 45.5 24.6"><defs><radialGradient id="g6" cx=".5" cy=".5" r=".7"><stop offset="0" stop-color="#35c0e8"/><stop offset="1" stop-color="#0f86b8"/></radialGradient></defs><rect x="0" y="0" width="45.5" height="24.6" fill="#8d8d8d"/><rect x="4.78" y="0.49" width="35.95" height="23.62" fill="url(#g6)" stroke="#0b1f3a" stroke-width="0.86"/><circle cx="26.8" cy="17.3" r="0.44" fill="#d6f6ff" opacity="0.77"/><circle cx="30.9" cy="21.3" r="0.21" fill="#d6f6ff" opacity="0.54"/><circle cx="38.0" cy="15.3" r="0.47" fill="#d6f6ff" opacity="0.37"/><circle cx="21.4" cy="6.4" r="0.36" fill="#d6f6ff" opacity="0.60"/><circle cx="5.5" cy="5.8" r="0.28" fill="#d6f6ff" opacity="0.76"/><circle cx="31.8" cy="4.5" r="0.44" fill="#d6f6ff" opacity="0.39"/><circle cx="26.6" cy="3.8" r="0.20" fill="#d6f6ff" opacity="0.74"/><circle cx="12.3" cy="5.7" r="0.49" fill="#d6f6ff" opacity="0.74"/><circle cx="15.1" cy="22.2" r="0.36" fill="#d6f6ff" opacity="0.65"/><circle cx="12.2" cy="21.7" r="0.41" fill="#d6f6ff" opacity="0.78"/><circle cx="36.3" cy="7.6" r="0.31" fill="#d6f6ff" opacity="0.40"/><circle cx="10.1" cy="2.4" r="0.29" fill="#d6f6ff" opacity="0.61"/><circle cx="5.1" cy="15.9" r="0.30" fill="#d6f6ff" opacity="0.47"/><circle cx="33.6" cy="11.6" r="0.29" fill="#d6f6ff" opacity="0.55"/><circle cx="29.7" cy="2.3" r="0.49" fill="#d6f6ff" opacity="0.33"/><circle cx="31.2" cy="19.6" r="0.21" fill="#d6f6ff" opacity="0.70"/><circle cx="17.8" cy="13.7" r="0.20" fill="#d6f6ff" opacity="0.34"/><circle cx="11.3" cy="22.0" r="0.26" fill="#d6f6ff" opacity="0.68"/><circle cx="37.5" cy="21.7" r="0.30" fill="#d6f6ff" opacity="0.49"/><circle cx="23.4" cy="18.1" r="0.23" fill="#d6f6ff" opacity="0.68"/><circle cx="32.9" cy="19.9" r="0.21" fill="#d6f6ff" opacity="0.77"/><circle cx="8.2" cy="8.5" r="0.38" fill="#d6f6ff" opacity="0.76"/><circle cx="16.9" cy="21.3" r="0.36" fill="#d6f6ff" opacity="0.47"/><circle cx="16.1" cy="4.9" r="0.22" fill="#d6f6ff" opacity="0.39"/><circle cx="29.1" cy="22.9" r="0.25" fill="#d6f6ff" opacity="0.34"/><circle cx="39.5" cy="12.7" r="0.32" fill="#d6f6ff" opacity="0.43"/><circle cx="25.8" cy="19.2" r="0.34" fill="#d6f6ff" opacity="0.52"/><circle cx="6.9" cy="21.2" r="0.21" fill="#d6f6ff" opacity="0.56"/><circle cx="34.3" cy="3.9" r="0.42" fill="#d6f6ff" opacity="0.78"/><circle cx="27.1" cy="18.3" r="0.23" fill="#d6f6ff" opacity="0.53"/><circle cx="10.2" cy="19.6" r="0.29" fill="#d6f6ff" opacity="0.54"/><circle cx="40.0" cy="19.7" r="0.49" fill="#d6f6ff" opacity="0.54"/><circle cx="22.1" cy="17.0" r="0.34" fill="#d6f6ff" opacity="0.46"/><circle cx="19.1" cy="4.2" r="0.31" fill="#d6f6ff" opacity="0.79"/><circle cx="38.6" cy="14.8" r="0.35" fill="#d6f6ff" opacity="0.48"/><circle cx="8.1" cy="7.0" r="0.43" fill="#d6f6ff" opacity="0.74"/><circle cx="17.6" cy="18.3" r="0.43" fill="#d6f6ff" opacity="0.65"/><circle cx="28.2" cy="17.7" r="0.31" fill="#d6f6ff" opacity="0.66"/><circle cx="14.8" cy="11.7" r="0.43" fill="#d6f6ff" opacity="0.65"/><circle cx="15.3" cy="21.8" r="0.39" fill="#d6f6ff" opacity="0.60"/><circle cx="5.4" cy="13.0" r="0.28" fill="#d6f6ff" opacity="0.64"/><circle cx="21.2" cy="19.0" r="0.39" fill="#d6f6ff" opacity="0.70"/><circle cx="17.2" cy="15.2" r="0.42" fill="#d6f6ff" opacity="0.72"/><circle cx="17.3" cy="19.5" r="0.46" fill="#d6f6ff" opacity="0.65"/><circle cx="39.2" cy="22.0" r="0.36" fill="#d6f6ff" opacity="0.57"/><rect x="0.96" y="1.08" width="2.87" height="2.76" fill="#fbfbfb"/><rect x="41.68" y="1.08" width="2.87" height="2.76" fill="#fbfbfb"/><rect x="0.96" y="6.00" width="2.87" height="2.76" fill="#fbfbfb"/><rect x="41.68" y="6.00" width="2.87" height="2.76" fill="#fbfbfb"/><rect x="0.96" y="10.92" width="2.87" height="2.76" fill="#fbfbfb"/><rect x="41.68" y="10.92" width="2.87" height="2.76" fill="#fbfbfb"/><rect x="0.96" y="15.84" width="2.87" height="2.76" fill="#fbfbfb"/><rect x="41.68" y="15.84" width="2.87" height="2.76" fill="#fbfbfb"/><rect x="0.96" y="20.76" width="2.87" height="2.76" fill="#fbfbfb"/><rect x="41.68" y="20.76" width="2.87" height="2.76" fill="#fbfbfb"/><ellipse cx="41.92" cy="25.00" rx="3.70" ry="1.30" fill="#c8791c"/><path d="M41.12 17.60H42.72L44.72 24.90H39.12Z" fill="#ec9526"/><path d="M40.02 21.00H43.82" stroke="#f7e6cc" stroke-width="1.00"/><path d="M40.72 18.60H43.12" stroke="#f7e6cc" stroke-width="0.60"/></svg>
<div class="t" style="left:180.2px;width:80px;text-align:center;top:125.6px;font-size:6.3px;transform:scaleX(0.95);color:#1a1a1a">A-1</div>
<div class="t" style="left:240.2px;width:80px;text-align:center;top:125.6px;font-size:6.3px;transform:scaleX(0.95);color:#1a1a1a">A-2</div>
<div class="t" style="left:300px;width:80px;text-align:center;top:125.6px;font-size:6.3px;transform:scaleX(0.95);color:#1a1a1a">BlogVwant Intro</div>
<div class="t" style="left:180.2px;width:80px;text-align:center;top:183.79999999999998px;font-size:6.3px;transform:scaleX(0.95);color:#1a1a1a">intro</div>
<div class="t" style="left:240.2px;width:80px;text-align:center;top:183.79999999999998px;font-size:6.3px;transform:scaleX(0.95);color:#1a1a1a">outro second</div>
<div class="t" style="left:240.2px;width:80px;text-align:center;top:191.79999999999998px;font-size:6.3px;transform:scaleX(0.95);color:#1a1a1a">updated</div>
<div class="t" style="left:300px;width:80px;text-align:center;top:183.79999999999998px;font-size:6.3px;transform:scaleX(0.95);color:#1a1a1a">Web - 46961</div>
<svg class="a" style="left:395.5px;top:121.4px;overflow:visible" width="86" height="46.8" viewBox="0 0 86 46.8"><defs><radialGradient id="g7" cx=".5" cy=".45" r=".6"><stop offset="0" stop-color="#1a4f8a"/><stop offset="1" stop-color="#07203f"/></radialGradient></defs><rect x="0" y="0" width="86" height="46.8" fill="#8d8d8d"/><rect x="9.03" y="0.94" width="67.94" height="44.93" fill="url(#g7)" stroke="#0b1f3a" stroke-width="1.64"/><path d="M20.5 26.2H62" stroke="#b5e2ff" stroke-width="0.7"/><ellipse cx="45" cy="21" rx="7" ry="11" fill="#3a8ad0" opacity=".3"/><circle cx="44.5" cy="20.6" r="0.85" fill="#8fd4ff" opacity="0.61"/><circle cx="46.3" cy="21.6" r="0.41" fill="#8fd4ff" opacity="0.64"/><circle cx="50.2" cy="28.8" r="0.36" fill="#8fd4ff" opacity="0.52"/><circle cx="52.2" cy="2.5" r="0.89" fill="#8fd4ff" opacity="0.88"/><circle cx="50.9" cy="22.5" r="0.39" fill="#8fd4ff" opacity="0.37"/><circle cx="46.9" cy="3.1" r="0.41" fill="#8fd4ff" opacity="0.49"/><circle cx="44.1" cy="30.5" r="0.61" fill="#8fd4ff" opacity="0.71"/><circle cx="46.0" cy="24.2" r="0.57" fill="#8fd4ff" opacity="0.51"/><circle cx="40.1" cy="9.0" r="0.47" fill="#8fd4ff" opacity="0.40"/><circle cx="54.5" cy="15.0" r="0.81" fill="#8fd4ff" opacity="0.57"/><circle cx="54.9" cy="10.4" r="0.35" fill="#8fd4ff" opacity="0.54"/><circle cx="33.8" cy="9.6" r="0.36" fill="#8fd4ff" opacity="0.39"/><circle cx="55.5" cy="7.2" r="0.64" fill="#8fd4ff" opacity="0.60"/><circle cx="36.8" cy="10.4" r="0.88" fill="#8fd4ff" opacity="0.79"/><circle cx="36.7" cy="14.8" r="0.81" fill="#8fd4ff" opacity="0.71"/><circle cx="36.8" cy="10.0" r="0.76" fill="#8fd4ff" opacity="0.54"/><circle cx="39.5" cy="3.6" r="0.35" fill="#8fd4ff" opacity="0.67"/><circle cx="37.8" cy="22.0" r="0.52" fill="#8fd4ff" opacity="0.60"/><circle cx="48.4" cy="31.3" r="0.41" fill="#8fd4ff" opacity="0.44"/><circle cx="38.0" cy="7.6" r="0.74" fill="#8fd4ff" opacity="0.87"/><circle cx="43.5" cy="4.6" r="0.32" fill="#8fd4ff" opacity="0.88"/><circle cx="49.1" cy="11.3" r="0.41" fill="#8fd4ff" opacity="0.75"/><circle cx="47.9" cy="30.8" r="0.67" fill="#8fd4ff" opacity="0.51"/><circle cx="59.4" cy="8.1" r="0.31" fill="#8fd4ff" opacity="0.51"/><circle cx="44.3" cy="3.1" r="0.41" fill="#8fd4ff" opacity="0.56"/><circle cx="48.3" cy="5.6" r="0.52" fill="#8fd4ff" opacity="0.84"/><circle cx="52.1" cy="21.5" r="0.38" fill="#8fd4ff" opacity="0.38"/><circle cx="45.4" cy="26.6" r="0.49" fill="#8fd4ff" opacity="0.90"/><circle cx="41.3" cy="25.0" r="0.84" fill="#8fd4ff" opacity="0.83"/><circle cx="43.3" cy="28.7" r="0.82" fill="#8fd4ff" opacity="0.67"/><circle cx="50.0" cy="14.4" r="0.65" fill="#8fd4ff" opacity="0.69"/><circle cx="53.3" cy="14.6" r="0.74" fill="#8fd4ff" opacity="0.67"/><circle cx="44.1" cy="30.3" r="0.35" fill="#8fd4ff" opacity="0.77"/><circle cx="45.4" cy="9.1" r="0.72" fill="#8fd4ff" opacity="0.63"/><circle cx="49.7" cy="33.2" r="0.45" fill="#8fd4ff" opacity="0.37"/><circle cx="39.6" cy="24.7" r="0.42" fill="#8fd4ff" opacity="0.45"/><circle cx="44.1" cy="32.2" r="0.50" fill="#8fd4ff" opacity="0.72"/><circle cx="36.4" cy="16.1" r="0.78" fill="#8fd4ff" opacity="0.85"/><circle cx="48.7" cy="12.1" r="0.38" fill="#8fd4ff" opacity="0.63"/><circle cx="38.9" cy="6.9" r="0.57" fill="#8fd4ff" opacity="0.51"/><circle cx="36.9" cy="15.5" r="0.68" fill="#8fd4ff" opacity="0.63"/><circle cx="32.4" cy="2.1" r="0.82" fill="#8fd4ff" opacity="0.38"/><circle cx="52.7" cy="21.0" r="0.49" fill="#8fd4ff" opacity="0.79"/><circle cx="44.6" cy="1.9" r="0.80" fill="#8fd4ff" opacity="0.49"/><circle cx="34.5" cy="2.6" r="0.68" fill="#8fd4ff" opacity="0.60"/><circle cx="50.2" cy="23.9" r="0.78" fill="#8fd4ff" opacity="0.88"/><circle cx="51.9" cy="8.0" r="0.59" fill="#8fd4ff" opacity="0.46"/><circle cx="52.9" cy="7.3" r="0.46" fill="#8fd4ff" opacity="0.55"/><circle cx="52.3" cy="19.2" r="0.67" fill="#8fd4ff" opacity="0.77"/><circle cx="42.6" cy="28.7" r="0.84" fill="#8fd4ff" opacity="0.41"/><circle cx="50.0" cy="32.8" r="0.53" fill="#8fd4ff" opacity="0.67"/><circle cx="50.8" cy="8.2" r="0.73" fill="#8fd4ff" opacity="0.80"/><circle cx="50.5" cy="26.1" r="0.43" fill="#8fd4ff" opacity="0.85"/><circle cx="47.2" cy="28.7" r="0.49" fill="#8fd4ff" opacity="0.85"/><circle cx="57.4" cy="13.2" r="0.35" fill="#8fd4ff" opacity="0.60"/><circle cx="47.6" cy="27.9" r="0.59" fill="#8fd4ff" opacity="0.38"/><circle cx="55.9" cy="3.2" r="0.78" fill="#8fd4ff" opacity="0.45"/><circle cx="40.7" cy="28.6" r="0.38" fill="#8fd4ff" opacity="0.44"/><circle cx="46.5" cy="26.3" r="0.80" fill="#8fd4ff" opacity="0.73"/><circle cx="60.4" cy="4.0" r="0.43" fill="#8fd4ff" opacity="0.64"/><circle cx="39.3" cy="26.5" r="0.68" fill="#8fd4ff" opacity="0.64"/><circle cx="40.0" cy="14.3" r="0.81" fill="#8fd4ff" opacity="0.85"/><circle cx="48.3" cy="8.0" r="0.62" fill="#8fd4ff" opacity="0.63"/><circle cx="49.4" cy="2.0" r="0.88" fill="#8fd4ff" opacity="0.64"/><circle cx="42.8" cy="29.0" r="0.64" fill="#8fd4ff" opacity="0.63"/><circle cx="52.1" cy="3.3" r="0.62" fill="#8fd4ff" opacity="0.58"/><circle cx="38.6" cy="17.6" r="0.38" fill="#8fd4ff" opacity="0.59"/><circle cx="45.2" cy="12.1" r="0.41" fill="#8fd4ff" opacity="0.69"/><circle cx="59.6" cy="5.5" r="0.77" fill="#8fd4ff" opacity="0.37"/><circle cx="36.2" cy="9.0" r="0.71" fill="#8fd4ff" opacity="0.53"/><circle cx="41.4" cy="22.7" r="0.36" fill="#8fd4ff" opacity="0.75"/><circle cx="38.0" cy="7.9" r="0.62" fill="#8fd4ff" opacity="0.60"/><circle cx="42.0" cy="15.5" r="0.62" fill="#8fd4ff" opacity="0.45"/><circle cx="50.4" cy="19.5" r="0.81" fill="#8fd4ff" opacity="0.69"/><circle cx="57.4" cy="9.1" r="0.74" fill="#8fd4ff" opacity="0.80"/><circle cx="58.4" cy="5.7" r="0.44" fill="#8fd4ff" opacity="0.75"/><circle cx="38.3" cy="4.4" r="0.80" fill="#8fd4ff" opacity="0.59"/><circle cx="55.3" cy="5.4" r="0.54" fill="#8fd4ff" opacity="0.73"/><circle cx="46.2" cy="27.5" r="0.60" fill="#8fd4ff" opacity="0.73"/><circle cx="36.0" cy="3.5" r="0.36" fill="#8fd4ff" opacity="0.38"/><circle cx="47.7" cy="19.0" r="0.64" fill="#8fd4ff" opacity="0.44"/><circle cx="35.9" cy="8.1" r="0.80" fill="#8fd4ff" opacity="0.89"/><circle cx="59.7" cy="4.3" r="0.34" fill="#8fd4ff" opacity="0.87"/><circle cx="44.8" cy="27.8" r="0.50" fill="#8fd4ff" opacity="0.61"/><circle cx="46.5" cy="16.1" r="0.66" fill="#8fd4ff" opacity="0.37"/><circle cx="35.8" cy="16.9" r="0.74" fill="#8fd4ff" opacity="0.58"/><circle cx="36.2" cy="6.8" r="0.61" fill="#8fd4ff" opacity="0.37"/><circle cx="50.1" cy="15.2" r="0.66" fill="#8fd4ff" opacity="0.63"/><circle cx="56.1" cy="15.2" r="0.84" fill="#8fd4ff" opacity="0.84"/><circle cx="52.2" cy="27.9" r="0.76" fill="#8fd4ff" opacity="0.58"/><circle cx="53.1" cy="3.5" r="0.51" fill="#8fd4ff" opacity="0.61"/><circle cx="50.4" cy="22.8" r="0.44" fill="#8fd4ff" opacity="0.87"/><circle cx="51.3" cy="12.8" r="0.70" fill="#8fd4ff" opacity="0.67"/><circle cx="47.1" cy="14.6" r="0.90" fill="#8fd4ff" opacity="0.71"/><circle cx="52.4" cy="27.7" r="0.89" fill="#8fd4ff" opacity="0.37"/><circle cx="49.7" cy="26.9" r="0.45" fill="#8fd4ff" opacity="0.58"/><circle cx="42.0" cy="4.4" r="0.45" fill="#8fd4ff" opacity="0.85"/><circle cx="47.6" cy="18.8" r="0.88" fill="#8fd4ff" opacity="0.67"/><circle cx="55.9" cy="3.7" r="0.66" fill="#8fd4ff" opacity="0.77"/><circle cx="49.6" cy="3.0" r="0.87" fill="#8fd4ff" opacity="0.59"/><circle cx="46.9" cy="21.9" r="0.52" fill="#8fd4ff" opacity="0.51"/><circle cx="51.0" cy="20.6" r="0.47" fill="#8fd4ff" opacity="0.75"/><circle cx="39.5" cy="1.5" r="0.45" fill="#8fd4ff" opacity="0.38"/><circle cx="42.5" cy="32.4" r="0.75" fill="#8fd4ff" opacity="0.39"/><circle cx="43.7" cy="17.7" r="0.88" fill="#8fd4ff" opacity="0.49"/><circle cx="46.7" cy="33.8" r="0.73" fill="#8fd4ff" opacity="0.61"/><circle cx="49.3" cy="5.0" r="0.67" fill="#8fd4ff" opacity="0.61"/><circle cx="36.5" cy="2.8" r="0.62" fill="#8fd4ff" opacity="0.43"/><circle cx="44.2" cy="24.4" r="0.57" fill="#8fd4ff" opacity="0.50"/><circle cx="48.6" cy="15.7" r="0.77" fill="#8fd4ff" opacity="0.65"/><rect x="1.81" y="2.06" width="5.42" height="5.24" fill="#fbfbfb"/><rect x="78.78" y="2.06" width="5.42" height="5.24" fill="#fbfbfb"/><rect x="1.81" y="11.42" width="5.42" height="5.24" fill="#fbfbfb"/><rect x="78.78" y="11.42" width="5.42" height="5.24" fill="#fbfbfb"/><rect x="1.81" y="20.78" width="5.42" height="5.24" fill="#fbfbfb"/><rect x="78.78" y="20.78" width="5.42" height="5.24" fill="#fbfbfb"/><rect x="1.81" y="30.14" width="5.42" height="5.24" fill="#fbfbfb"/><rect x="78.78" y="30.14" width="5.42" height="5.24" fill="#fbfbfb"/><rect x="1.81" y="39.50" width="5.42" height="5.24" fill="#fbfbfb"/><rect x="78.78" y="39.50" width="5.42" height="5.24" fill="#fbfbfb"/><ellipse cx="79.23" cy="47.56" rx="7.04" ry="2.47" fill="#c8791c"/><path d="M77.71 33.48H80.75L84.55 47.37H73.90Z" fill="#ec9526"/><path d="M75.61 39.95H82.84" stroke="#f7e6cc" stroke-width="1.90"/><path d="M76.94 35.39H81.51" stroke="#f7e6cc" stroke-width="1.14"/></svg>
<div class="a" style="left:109.5px;top:218px;width:376px;height:39px;background:#f0f0f0"></div>
<div class="t" style="left:154px;width:40px;text-align:right;top:228px;font-size:6.2px;transform:scaleX(0.94);transform-origin:100% 0;color:#1a1a1a">File name:</div>
<div class="a" style="left:195.6px;top:224.2px;width:184.4px;height:11.2px;border:0.8px solid #9a9a9a;background:#fff"></div>
<div class="t" style="left:197.8px;top:227.6px;font-size:6.2px;transform:scaleX(0.94);transform-origin:0 0;color:#1a1a1a">BlogVwant Intro</div>
<svg class="a" style="left:372.5px;top:228.8px" width="5" height="3"><path d="M0.4 0.4L2.4 2.3L4.4 0.4" stroke="#555" stroke-width="0.6" fill="none"/></svg>
<div class="a" style="left:386px;top:224.4px;width:92.6px;height:11.2px;border:0.8px solid #c6c6c6;background:#e5e5e5"></div>
<div class="t" style="left:388.3px;top:227.6px;font-size:6.2px;transform:scaleX(0.94);transform-origin:0 0;color:#1a1a1a">All Files</div>
<svg class="a" style="left:472px;top:228.8px" width="5" height="3"><path d="M0.4 0.4L2.4 2.3L4.4 0.4" stroke="#555" stroke-width="0.6" fill="none"/></svg>
<div class="a" style="left:386.7px;top:238.3px;width:43px;height:12.9px;border:0.9px solid #3c9ee6;background:#e5f1fb"></div>
<div class="t" style="left:388px;width:40px;text-align:center;top:243px;font-size:6.2px;transform:scaleX(0.94);transform-origin:50% 0;color:#1a1a1a">Open</div>
<div class="a" style="left:436px;top:239px;width:42.4px;height:11.4px;border:0.8px solid #c6c6c6;background:#e1e1e1"></div>
<div class="t" style="left:437px;width:40px;text-align:center;top:243px;font-size:6.2px;transform:scaleX(0.94);transform-origin:50% 0;color:#1a1a1a">Cancel</div>
<svg class="a" style="left:480.5px;top:251.5px" width="4" height="4"><g fill="#aaa"><rect x="2.6" y="0" width="0.8" height="0.8"/><rect x="1.3" y="1.3" width="0.8" height="0.8"/><rect x="2.6" y="1.3" width="0.8" height="0.8"/><rect x="0" y="2.6" width="0.8" height="0.8"/><rect x="1.3" y="2.6" width="0.8" height="0.8"/><rect x="2.6" y="2.6" width="0.8" height="0.8"/></g></svg>
<svg class="a" style="left:326px;top:233px" width="70" height="22"><path d="M3.5 7.6H52.2L47.8 2.4Q57 6.5 66.3 10.6Q57 14.8 47.8 19L52.2 13.7H3.5Q2.6 10.6 3.5 7.6Z" fill="#d6322e" stroke="#c02a26" stroke-width="0.5" stroke-linejoin="round"/></svg>
<svg class="a" style="left:406px;top:243px" width="7" height="10"><path d="M1 0.5V7.5L2.6 6.2L3.8 9L5 8.5L3.9 5.8H6Z" fill="#fff" stroke="#222" stroke-width="0.5"/></svg>
</body></html>
